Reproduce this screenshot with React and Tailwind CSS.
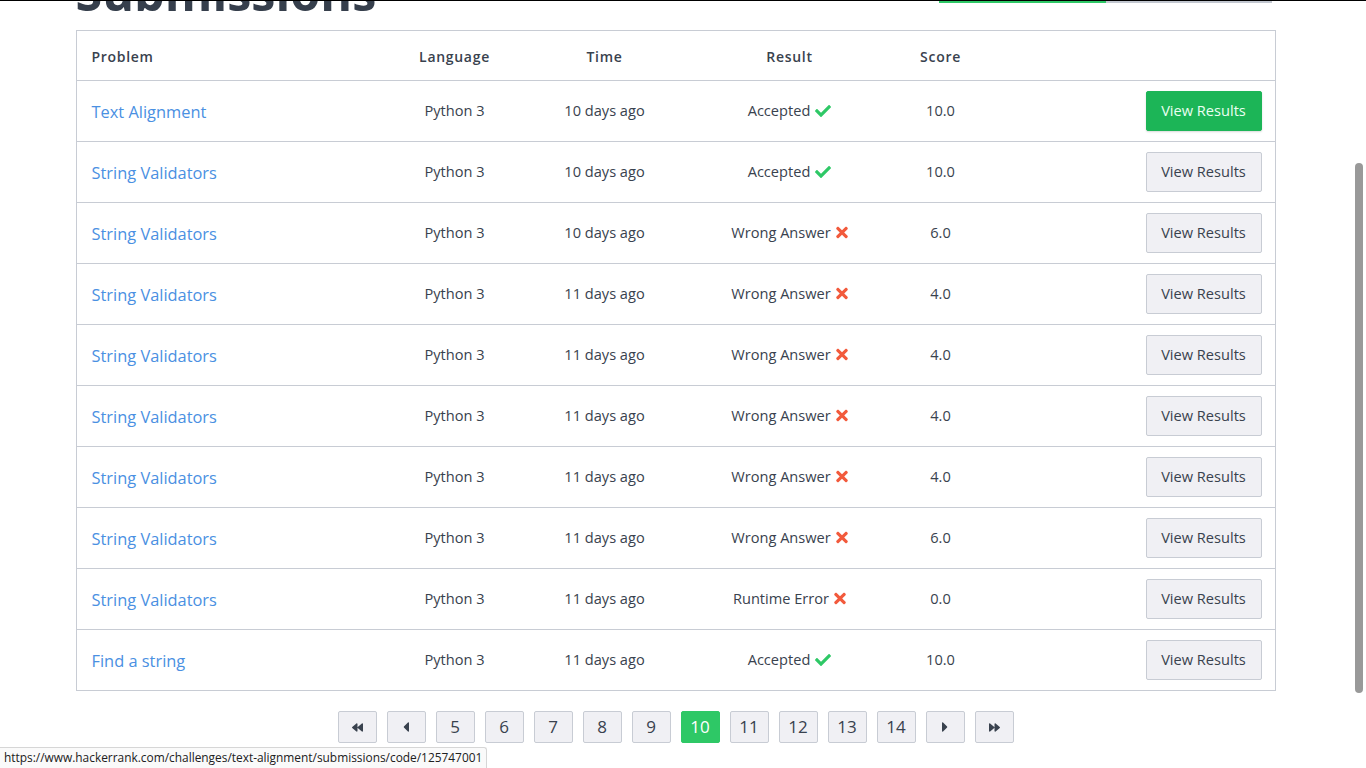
import React from 'react';
import { FaCheck, FaTimes, FaBackward, FaForward, FaCaretLeft, FaCaretRight } from 'react-icons/fa';

const submissions = [
  { problem: 'Text Alignment', time: '10 days ago', result: 'Accepted', ok: true, score: '10.0', active: true },
  { problem: 'String Validators', time: '10 days ago', result: 'Accepted', ok: true, score: '10.0' },
  { problem: 'String Validators', time: '10 days ago', result: 'Wrong Answer', ok: false, score: '6.0' },
  { problem: 'String Validators', time: '11 days ago', result: 'Wrong Answer', ok: false, score: '4.0' },
  { problem: 'String Validators', time: '11 days ago', result: 'Wrong Answer', ok: false, score: '4.0' },
  { problem: 'String Validators', time: '11 days ago', result: 'Wrong Answer', ok: false, score: '4.0' },
  { problem: 'String Validators', time: '11 days ago', result: 'Wrong Answer', ok: false, score: '4.0' },
  { problem: 'String Validators', time: '11 days ago', result: 'Wrong Answer', ok: false, score: '6.0' },
  { problem: 'String Validators', time: '11 days ago', result: 'Runtime Error', ok: false, score: '0.0' },
  { problem: 'Find a string', time: '11 days ago', result: 'Accepted', ok: true, score: '10.0' },
];

const cols = 'grid grid-cols-[303px_150px_150px_220px_82px_1fr] items-center';

function PageButton({ children, active }) {
  return (
    <button
      className={
        'w-[39px] h-[32px] flex items-center justify-center rounded-[2px] border text-[17px] ' +
        (active
          ? 'bg-[#2ec866] border-[#2ec866] text-white'
          : 'bg-[#f0f0f4] border-[#c8ccd4] text-[#39424e]')
      }
    >
      {children}
    </button>
  );
}

export default function App() {
  return (
    <div className="relative h-[768px] w-full overflow-hidden bg-white font-['Open_Sans',sans-serif] text-[#39424e]">
      {/* window edge + cut-off progress bar */}
      <div className="absolute top-0 left-0 right-0 h-px bg-black z-10" />
      <div className="absolute top-px left-[939px] w-[333px] h-[2px] flex z-10">
        <div className="w-[167px] bg-[#2ec866]" />
        <div className="flex-1 bg-[#c2c7d0]" />
      </div>

      <div className="flex">
        <main className="w-[1351px] flex justify-center">
          <div className="w-[1200px]">
            <h1 className="-mt-[32px] mb-[14px] h-[48px] text-[48.5px] leading-[48px] font-bold text-[#363f4c]">
              Submissions
            </h1>

            <div className="border border-[#c8ccd4]">
              <div className={cols + ' h-[49px] pt-[2px] text-[14px] font-semibold tracking-[0.05em] text-[#39424e]'}>
                <div className="pl-[15px]">Problem</div>
                <div className="text-center">Language</div>
                <div className="text-center">Time</div>
                <div className="text-center">Result</div>
                <div className="text-center">Score</div>
                <div />
              </div>
              {submissions.map((s, i) => (
                <div key={i} className={cols + ' h-[61px] border-t border-[#c8ccd4] text-[14.6px]'}>
                  <div className="pl-[15px] pt-[3px] text-[16.4px] text-[#4a90e2]">{s.problem}</div>
                  <div className="text-center">Python 3</div>
                  <div className="text-center">{s.time}</div>
                  <div className="flex items-center justify-center gap-[5px]">
                    <span>{s.result}</span>
                    {s.ok ? (
                      <FaCheck className="text-[#2ec866] w-[16px] h-[16px]" />
                    ) : (
                      <FaTimes className="text-[#f25a3c] w-[12px] h-[17px]" />
                    )}
                  </div>
                  <div className="text-center">{s.score}</div>
                  <div className="flex justify-end pr-[13px]">
                    <button
                      className={
                        'w-[116px] h-[40px] rounded-[2px] text-[14.6px] border ' +
                        (s.active
                          ? 'bg-[#1cb557] border-[#1cb557] text-[#eafff2] shadow-[0_1px_2px_rgba(0,0,0,0.15)]'
                          : 'bg-[#f0f0f4] border-[#c8ccd4] text-[#39424e]')
                      }
                    >
                      View Results
                    </button>
                  </div>
                </div>
              ))}
            </div>

            <div className="mt-[20px] flex justify-center gap-[10px]">
              <PageButton><FaBackward className="w-[11px] h-[11px]" /></PageButton>
              <PageButton><FaCaretLeft className="w-[12px] h-[16px]" /></PageButton>
              {['5', '6', '7', '8', '9', '10', '11', '12', '13', '14'].map((n) => (
                <PageButton key={n} active={n === '10'}>{n}</PageButton>
              ))}
              <PageButton><FaCaretRight className="w-[12px] h-[16px]" /></PageButton>
              <PageButton><FaForward className="w-[11px] h-[11px]" /></PageButton>
            </div>
          </div>
        </main>
        <div className="w-[15px] pt-[163px] pl-[4px]">
          <div className="w-[8px] h-[530px] rounded-full bg-[#999999]" />
        </div>
      </div>

      {/* browser status bubble */}
      <div className="absolute left-0 bottom-0 h-[21px] pl-[4px] pr-[4px] flex items-center bg-[#fafafa] border-t border-r border-[#d6d6d6] rounded-tr-[3px] text-[11.9px] text-[#202020] font-['Open_Sans',sans-serif]">
        https://www.hackerrank.com/challenges/text-alignment/submissions/code/125747001
      </div>
    </div>
  );
}
